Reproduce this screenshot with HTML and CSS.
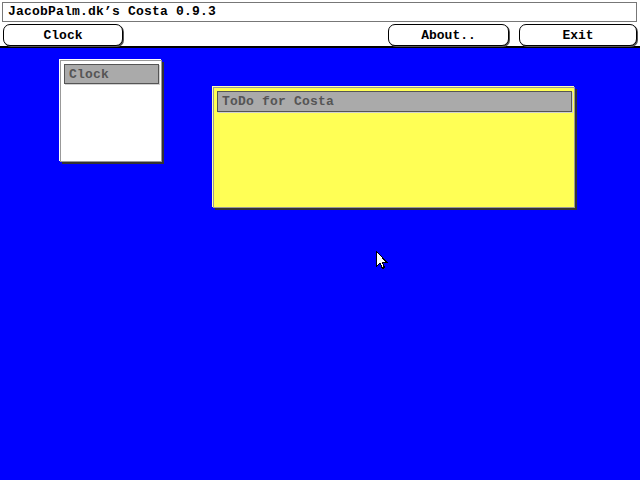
FILE: index.html
```html
<!DOCTYPE html>
<html>
<head>
<meta charset="utf-8">
<link rel="stylesheet" href="styles.css">
</head>
<body>
<div class="header">
  <div class="titlefield">JacobPalm.dk’s Costa 0.9.3</div>
  <div class="toolbar">
    <button class="btn">Clock</button>
    <div class="spacer"></div>
    <button class="btn btn-about">About..</button>
    <button class="btn btn-exit">Exit</button>
  </div>
</div>
<div class="desktop">
  <div class="win win-clock">
    <div class="wtitle">Clock</div>
  </div>
  <div class="win win-todo">
    <div class="wtitle">ToDo for Costa</div>
  </div>
  <svg class="cursor" width="12" height="19" viewBox="0 0 12 19">
    <path d="M0.5 0.5 L0.5 15.5 L4 12 L6.5 17.5 L8.5 16.5 L6 11 L10.5 11 Z" fill="#fff" stroke="#000" stroke-width="1" shape-rendering="crispEdges"/>
  </svg>
</div>
</body>
</html>
```

FILE: styles.css
```css
html, body {
  margin: 0;
  padding: 0;
}
body {
  width: 640px;
  height: 480px;
  overflow: hidden;
  background: #0000ff;
  font-family: "Liberation Mono", "DejaVu Sans Mono", monospace;
  font-weight: bold;
  font-size: 13px;
}
.header {
  background: #fff;
  box-sizing: border-box;
  padding: 2px 3px 0 2px;
  height: 48px;
  border-bottom: 2px solid #000;
}
.titlefield {
  height: 20px;
  box-sizing: border-box;
  border: 1px solid #777;
  padding-left: 5px;
  line-height: 18px;
  color: #000;
  letter-spacing: 0.2px;
}
.toolbar {
  display: flex;
  margin-top: 2px;
  padding-left: 1px;
  gap: 10px;
}
.spacer {
  flex: 1;
}
.btn {
  width: 120px;
  height: 22px;
  box-sizing: border-box;
  border: 1px solid #000;
  border-radius: 7px;
  box-shadow: 1px 1px 0 #555;
  background: #fff;
  font: inherit;
  color: #000;
  padding: 0;
  line-height: 19px;
}
.btn-about {
  width: 121px;
}
.btn-exit {
  width: 118px;
}
.desktop {
  position: relative;
  height: 432px;
}
.win {
  position: absolute;
  box-sizing: border-box;
  border: 1px solid #999;
  padding: 3px 0 0 3px;
}
.win-clock {
  left: 60px;
  top: 12px;
  width: 102px;
  height: 102px;
  background: #fff;
  box-shadow: -1px -1px 0 #fff, 2px 2px 0 #333;
}
.win-todo {
  left: 213px;
  top: 39px;
  width: 362px;
  height: 121px;
  background: #ffff55;
  box-shadow: -1px -1px 0 #ffffaa, 2px 2px 0 #333;
}
.wtitle {
  box-sizing: border-box;
  border: 1px solid #555;
  background: #aaaaaa;
  box-shadow: 1px 1px 0 #d0d0d0;
  color: #555;
  padding-left: 4px;
  letter-spacing: 0.2px;
}
.win-clock .wtitle {
  width: 95px;
  height: 20px;
  line-height: 19px;
}
.win-todo .wtitle {
  width: 355px;
  height: 21px;
  line-height: 19px;
}
.cursor {
  position: absolute;
  left: 376px;
  top: 203px;
}
```
